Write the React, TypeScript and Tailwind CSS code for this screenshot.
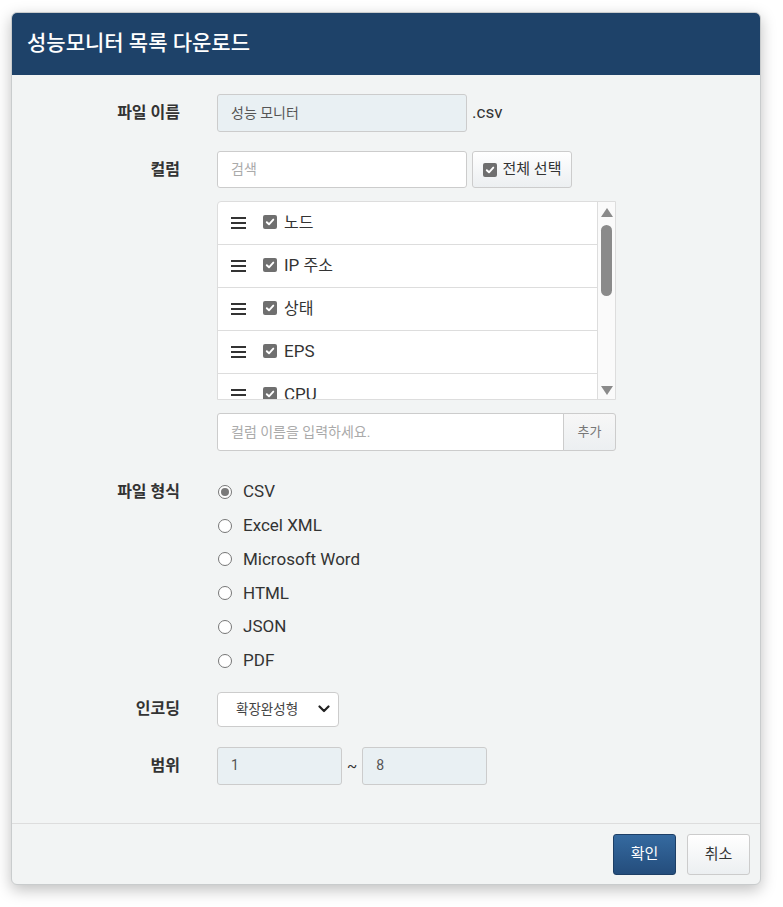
import React from "react";

const FONT = { fontFamily: 'Roboto, "Noto Sans CJK KR", "Noto Sans", sans-serif' };

function Mixed({ text, latin, hangul }: { text: string; latin: string; hangul: string }) {
  const parts = text.match(/[\uAC00-\uD7A3]+|[^\uAC00-\uD7A3]+/g) || [];
  return (
    <>
      {parts.map((p, i) => (
        <span key={i} className={/[\uAC00-\uD7A3]/.test(p) ? hangul : latin}>
          {p}
        </span>
      ))}
    </>
  );
}

function Check() {
  return (
    <span className="inline-flex h-[14px] w-[14px] items-center justify-center rounded-[2px] bg-[#6f6f6f]">
      <svg width="10" height="10" viewBox="0 0 10 10">
        <path d="M1.8 5.2 L4 7.3 L8.3 2.6" fill="none" stroke="#fff" strokeWidth="1.9" strokeLinecap="round" strokeLinejoin="round" />
      </svg>
    </span>
  );
}

function Bars() {
  return (
    <span className="flex w-[15px] flex-col gap-[3px]">
      <span className="h-[2px] w-full bg-[#333]" />
      <span className="h-[2px] w-full bg-[#333]" />
      <span className="h-[2px] w-full bg-[#333]" />
    </span>
  );
}

function Radio({ checked }: { checked?: boolean }) {
  return (
    <span className="flex h-[14px] w-[14px] items-center justify-center rounded-full border border-[#767676] bg-white">
      {checked && <span className="h-[8px] w-[8px] rounded-full bg-[#7a7a7a]" />}
    </span>
  );
}

function Label({ children }: { children: React.ReactNode }) {
  return (
    <div className="w-[168px] shrink-0 text-right text-[16px] font-bold text-[#333]">{children}</div>
  );
}

export default function App() {
  const cols = ["노드", "IP 주소", "상태", "EPS", "CPU"];
  const formats = ["CSV", "Excel XML", "Microsoft Word", "HTML", "JSON", "PDF"];
  return (
    <div className="min-h-[907px] bg-white pt-[12px] pl-[11px]" style={FONT}>
      <div className="w-[750px] overflow-hidden rounded-[6px] border border-[#c9cccd] bg-[#f2f4f4] shadow-[0_5px_15px_rgba(0,0,0,0.25)]">
        <div className="flex h-[62px] items-center bg-[#1e4269] px-[15px]">
          <div className="text-[21px] font-medium text-white">성능모니터 목록 다운로드</div>
        </div>

        <div className="pt-[19px] pb-[38px]">
          {/* file name */}
          <div className="flex h-[38px] items-center">
            <Label>파일 이름</Label>
            <div className="ml-[37px] flex items-center">
              <div className="flex h-[38px] w-[250px] items-center rounded-[3px] border border-[#ccc] bg-[#e9f0f3] px-[13px] text-[14px] text-[#555]">
                성능 모니터
              </div>
              <span className="ml-[5px] text-[17px] text-[#333]">.csv</span>
            </div>
          </div>

          {/* column */}
          <div className="mt-[19px] flex h-[37px] items-center">
            <Label>컬럼</Label>
            <div className="ml-[37px] flex items-center">
              <div className="flex h-[37px] w-[250px] items-center rounded-[3px] border border-[#ccc] bg-white px-[13px] text-[14px] text-[#aaa]">
                검색
              </div>
              <button className="ml-[5px] flex h-[37px] w-[100px] items-center justify-center gap-[6px] rounded-[3px] border border-[#ccc] bg-gradient-to-b from-white to-[#eceff1] text-[15px] text-[#333]">
                <Check />
                <span>전체 선택</span>
              </button>
            </div>
          </div>

          {/* list */}
          <div className="mt-[13px] flex">
            <div className="w-[168px] shrink-0" />
            <div className="ml-[37px] flex h-[199px] w-[399px] overflow-hidden rounded-tl-[4px] border border-[#ddd] bg-white">
              <div className="flex-1 overflow-hidden">
                {cols.map((c) => (
                  <div key={c} className="flex h-[43px] shrink-0 items-center border-b border-[#ddd] pl-[13px]">
                    <Bars />
                    <span className="ml-[17px] -mt-[3px]"><Check /></span>
                    <span className="ml-[7px] text-[#333]">
                      <Mixed text={c} latin="text-[17px]" hangul="text-[16px]" />
                    </span>
                  </div>
                ))}
              </div>
              <div className="relative w-[18px] shrink-0 border-l border-[#ddd] bg-[#fafafa]">
                <svg className="absolute left-[3px] top-[6px]" width="12" height="9" viewBox="0 0 12 9">
                  <path d="M6 0 L12 9 L0 9 Z" fill="#8a8a8a" />
                </svg>
                <div className="absolute left-[3px] top-[23px] h-[71px] w-[11px] rounded-full bg-[#8a8a8a]" />
                <svg className="absolute left-[3px] top-[184px]" width="12" height="9" viewBox="0 0 12 9">
                  <path d="M0 0 L12 0 L6 9 Z" fill="#8a8a8a" />
                </svg>
              </div>
            </div>
          </div>

          {/* add column */}
          <div className="mt-[13px] flex h-[38px] items-center">
            <div className="w-[168px] shrink-0" />
            <div className="ml-[37px] flex">
              <div className="flex h-[38px] w-[347px] items-center rounded-l-[3px] border border-[#ccc] bg-white px-[13px] text-[14px] text-[#aaa]">
                컬럼 이름을 입력하세요.
              </div>
              <div className="-ml-px flex h-[38px] w-[53px] items-center justify-center rounded-r-[3px] border border-[#ccc] bg-gradient-to-b from-[#f7f7f7] to-[#eceff1] text-[13px] text-[#777]">
                추가
              </div>
            </div>
          </div>

          {/* file format */}
          <div className="mt-[24px] flex">
            <div className="flex h-[34px] w-[168px] shrink-0 items-center justify-end text-[16px] font-bold text-[#333]">
              파일 형식
            </div>
            <div className="ml-[38px] flex flex-col">
              {formats.map((f, i) => (
                <div key={f} className="flex h-[33.8px] items-center">
                  <Radio checked={i === 0} />
                  <span className="ml-[11px] text-[17px] text-[#333]">{f}</span>
                </div>
              ))}
            </div>
          </div>

          {/* encoding */}
          <div className="mt-[14px] flex h-[35px] items-center">
            <Label>인코딩</Label>
            <div className="ml-[37px]">
              <div className="flex h-[35px] w-[122px] items-center justify-between rounded-[4px] border border-[#ccc] bg-white pl-[18px] pr-[8px] text-[13.5px] text-[#444]">
                <span>확장완성형</span>
                <svg width="12" height="8" viewBox="0 0 12 8">
                  <path d="M1.5 1.5 L6 6 L10.5 1.5" fill="none" stroke="#222" strokeWidth="2.2" strokeLinecap="round" strokeLinejoin="round" />
                </svg>
              </div>
            </div>
          </div>

          {/* range */}
          <div className="mt-[20px] flex h-[38px] items-center">
            <Label>범위</Label>
            <div className="ml-[37px] flex items-center">
              <div className="flex h-[38px] w-[125px] items-center rounded-[3px] border border-[#ccc] bg-[#e9f0f3] px-[13px] text-[14px] text-[#555]">
                1
              </div>
              <span className="mx-[5px] text-[15px] text-[#333]">~</span>
              <div className="flex h-[38px] w-[125px] items-center rounded-[3px] border border-[#ccc] bg-[#e9f0f3] px-[13px] text-[14px] text-[#555]">
                8
              </div>
            </div>
          </div>
        </div>

        {/* footer */}
        <div className="flex justify-end gap-[11px] border-t border-[#ddd] pt-[10px] pb-[9px] pr-[10px]">
          <button className="h-[41px] w-[63px] rounded-[3px] border border-[#1d3f66] bg-gradient-to-b from-[#356aa0] to-[#244d7c] text-[15px] text-white">
            확인
          </button>
          <button className="h-[41px] w-[63px] rounded-[3px] border border-[#ccc] bg-gradient-to-b from-white to-[#eceff1] text-[15px] text-[#333]">
            취소
          </button>
        </div>
      </div>
    </div>
  );
}
